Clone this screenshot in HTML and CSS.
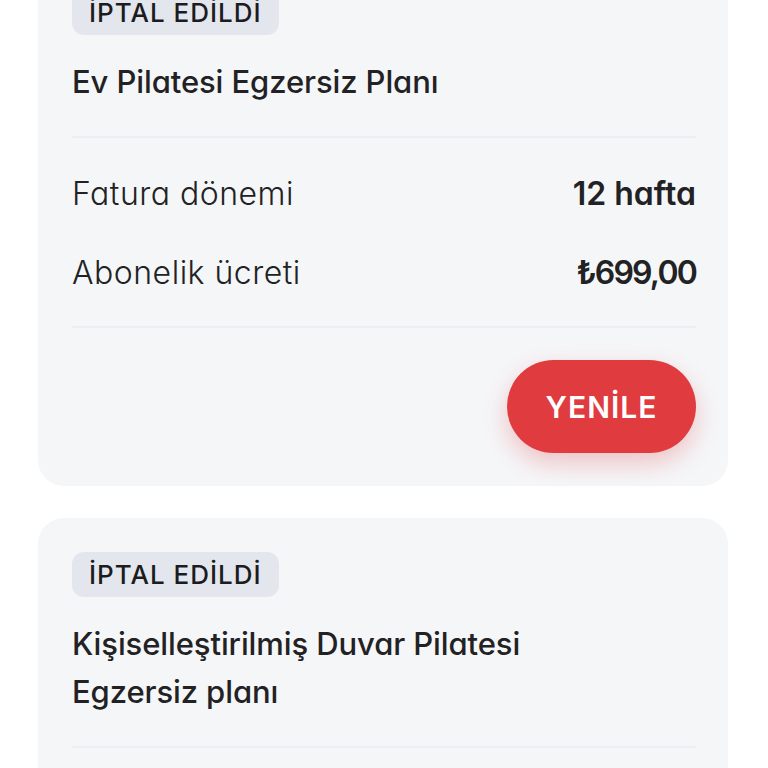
FILE: index.html
```html
<!DOCTYPE html>
<html lang="tr">
<head>
<meta charset="utf-8">
<title>Abonelikler</title>
<link rel="stylesheet" href="styles.css">
</head>
<body>
<main class="list">
  <section class="card">
    <span class="badge">İPTAL EDİLDİ</span>
    <h2 class="title">Ev Pilatesi Egzersiz Planı</h2>
    <div class="divider"></div>
    <div class="rows">
      <div class="row"><span class="label">Fatura dönemi</span><span class="value">12 hafta</span></div>
      <div class="row"><span class="label">Abonelik ücreti</span><span class="value price">₺699,00</span></div>
    </div>
    <div class="divider"></div>
    <div class="actions"><button class="renew">YENİLE</button></div>
  </section>
  <section class="card">
    <span class="badge">İPTAL EDİLDİ</span>
    <h2 class="title">Kişiselleştirilmiş Duvar Pilatesi<br>Egzersiz planı</h2>
    <div class="divider"></div>
    <div class="rows">
      <div class="row"><span class="label">Fatura dönemi</span><span class="value">12 hafta</span></div>
      <div class="row"><span class="label">Abonelik ücreti</span><span class="value price">₺699,00</span></div>
    </div>
  </section>
</main>
</body>
</html>
```
FILE: styles.css
```css
html, body {
  margin: 0;
  padding: 0;
  background: #ffffff;
}
body {
  font-family: Inter, "Noto Sans", "DejaVu Sans", sans-serif;
  font-feature-settings: "cv11";
  color: #222224;
  overflow: hidden;
  height: 768px;
}
.list {
  display: flex;
  flex-direction: column;
  gap: 32px;
  width: 690px;
  margin: -44px 0 0 38px;
}
.card {
  background: #f5f6f8;
  border-radius: 26px;
  padding: 34px 32px 33px 34px;
  display: flex;
  flex-direction: column;
  align-items: stretch;
}
.badge {
  align-self: flex-start;
  background: #e3e6ed;
  border-radius: 12px;
  height: 45px;
  padding: 0 17px 0 17px;
  display: flex;
  align-items: center;
  font-size: 26px;
  font-weight: 500;
  letter-spacing: 1px;
  color: #1c1c1e;
}
.title {
  margin: 23px 0 30px;
  font-size: 31px;
  line-height: 48px;
  font-weight: 500;
  letter-spacing: -0.1px;
}
.divider {
  height: 2px;
  background: #eceef2;
}
.rows {
  display: flex;
  flex-direction: column;
  gap: 31px;
  padding: 31px 0 30px;
}
.row {
  display: flex;
  justify-content: space-between;
  align-items: center;
  height: 48px;
  font-size: 32px;
}
.label {
  font-weight: 300;
  letter-spacing: 0.5px;
}
.value {
  font-weight: 600;
  letter-spacing: 0;
}
.price {
  letter-spacing: -1.8px;
}
.actions {
  display: flex;
  justify-content: flex-end;
  padding-top: 32px;
}
.renew {
  width: 189px;
  height: 93px;
  border: none;
  border-radius: 47px;
  background: #e03c3f;
  color: #ffffff;
  font-family: inherit;
  font-size: 30px;
  font-weight: 600;
  letter-spacing: 1px;
  box-shadow: 0 10px 24px rgba(224, 60, 63, 0.28);
}
```
